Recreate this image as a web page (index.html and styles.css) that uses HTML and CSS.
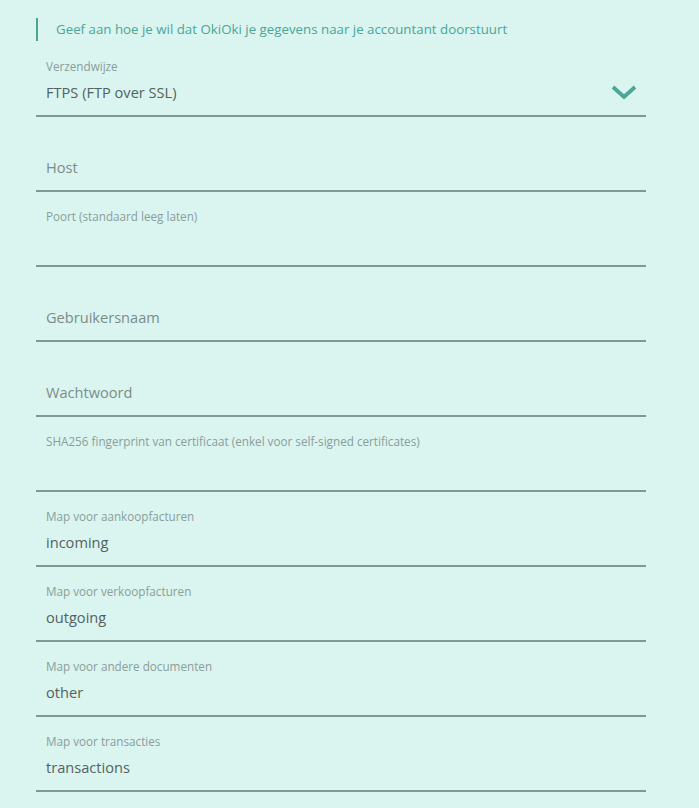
FILE: index.html
```html
<!DOCTYPE html>
<html lang="nl">
<head>
    <meta charset="UTF-8" />
    <meta name="viewport" content="width=device-width, initial-scale=1.0"/>
    <title>Export naar accountant | OkiOki</title>
    <link rel="stylesheet" href="styles.css">
</head>
<body>

<main class="export">
    <p class="intro">Geef aan hoe je wil dat OkiOki je gegevens naar je accountant doorstuurt</p>

    <form class="export-form">
        <label class="field field-select">
            <span class="field-label">Verzendwijze</span>
            <span class="field-value">FTPS (FTP over SSL)</span>
            <svg class="chevron" width="26" height="16" viewBox="0 0 26 16">
                <path d="M2 3 L13 13 L24 3" fill="none" stroke="#4ba697" stroke-width="3.8"/>
            </svg>
        </label>

        <label class="field">
            <span class="field-placeholder">Host</span>
        </label>

        <label class="field">
            <span class="field-label">Poort (standaard leeg laten)</span>
            <span class="field-value"></span>
        </label>

        <label class="field">
            <span class="field-placeholder">Gebruikersnaam</span>
        </label>

        <label class="field">
            <span class="field-placeholder">Wachtwoord</span>
        </label>

        <label class="field">
            <span class="field-label">SHA256 fingerprint van certificaat (enkel voor self-signed certificates)</span>
            <span class="field-value"></span>
        </label>

        <label class="field">
            <span class="field-label">Map voor aankoopfacturen</span>
            <span class="field-value">incoming</span>
        </label>

        <label class="field">
            <span class="field-label">Map voor verkoopfacturen</span>
            <span class="field-value">outgoing</span>
        </label>

        <label class="field">
            <span class="field-label">Map voor andere documenten</span>
            <span class="field-value">other</span>
        </label>

        <label class="field">
            <span class="field-label">Map voor transacties</span>
            <span class="field-value">transactions</span>
        </label>
    </form>
</main>

</body>
</html>
```

FILE: styles.css
```css
body {
    font-family: 'Open Sans', sans-serif;
    background-color: #daf4f0;
    margin: 0;
    padding: 0;
    color: #4d625f;
}

.export {
    width: 610px;
    margin-left: 36px;
    padding-top: 18px;
}

.intro {
    margin: 0 0 1px;
    height: 23px;
    line-height: 23px;
    padding-left: 18px;
    border-left: 2px solid #4ba697;
    color: #4ba697;
    font-size: 13.3px;
}

.export-form {
    display: flex;
    flex-direction: column;
}

.field {
    position: relative;
    display: flex;
    flex-direction: column;
    height: 73px;
    padding-left: 10px;
    border-bottom: 2px solid #7f9893;
}

.field-label {
    margin-top: 16px;
    height: 16px;
    line-height: 16px;
    font-size: 11.7px;
    color: #8a9e9a;
}

.field-value {
    margin-top: 8px;
    height: 20px;
    line-height: 20px;
    font-size: 14.6px;
    color: #52635f;
}

.field-placeholder {
    margin-top: 40px;
    height: 20px;
    line-height: 20px;
    font-size: 14.6px;
    color: #7d8c89;
}

.chevron {
    position: absolute;
    right: 9px;
    top: 42px;
}
```
